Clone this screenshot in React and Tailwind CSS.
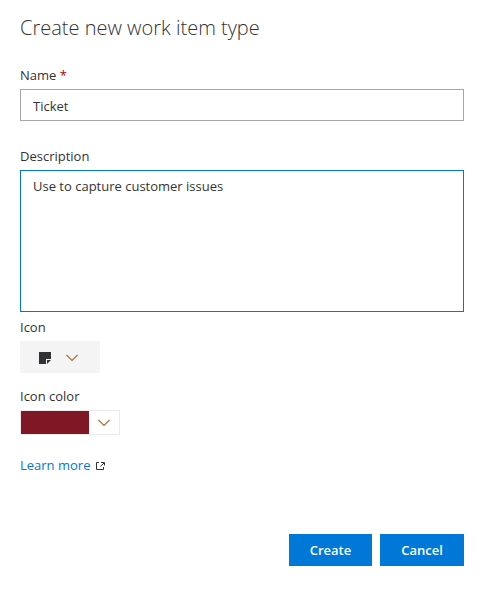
import { useState } from "react";

function Chevron() {
  return (
    <svg className="h-3 w-3 shrink-0" viewBox="0 0 12 12" fill="none" stroke="#a8703f" aria-hidden="true">
      <path d="M0.5 3 L6 8.5 L11.5 3" strokeWidth="1.2" />
    </svg>
  );
}

function NoteIcon() {
  return (
    <svg className="h-3 w-3 shrink-0" viewBox="0 0 12 12" fill="#323234" aria-hidden="true">
      <path d="M0 0H12V7H7V12H0Z" />
      <path d="M8 8H12L8 12Z" />
    </svg>
  );
}

function ExternalIcon() {
  return (
    <svg className="h-[9px] w-[9px]" viewBox="0 0 9 9" fill="none" stroke="#333333" aria-hidden="true">
      <path d="M3 1.5H0.5V8.5H7.5V6" />
      <path d="M5 1.5H8.5V4.5M8 2L4.5 5.5" />
    </svg>
  );
}

export default function App() {
  const [name, setName] = useState("Ticket");
  const [description, setDescription] = useState("Use to capture customer issues");

  return (
    <main className="min-h-screen bg-white pt-3 pr-[35px] pb-6 pl-5 font-['Open_Sans','Noto_Sans',sans-serif] text-[13px] leading-5 text-[#333333]">
      <h1 className="text-[20px] leading-8 font-light text-[#333333]">Create new work item type</h1>
      <form className="mt-[21px]" onSubmit={(e) => e.preventDefault()}>
        <div className="flex flex-col gap-1">
          <label htmlFor="name">
            Name <span className="text-[#a80000]">*</span>
          </label>
          <input
            id="name"
            type="text"
            required
            value={name}
            onChange={(e) => setName(e.target.value)}
            className="h-8 w-full border border-[#a6a6a6] bg-white px-3 pt-0.5 outline-none"
          />
        </div>
        <div className="mt-[25px] flex flex-col gap-1">
          <label htmlFor="description">Description</label>
          <textarea
            id="description"
            value={description}
            onChange={(e) => setDescription(e.target.value)}
            className="h-[142px] w-full resize-none border border-[#0078d4] bg-white px-3 py-[5px] outline-none"
          />
        </div>
        <div className="mt-[5px] flex flex-col items-start gap-1">
          <label htmlFor="icon">Icon</label>
          <button
            id="icon"
            type="button"
            aria-haspopup="listbox"
            className="flex h-8 w-20 items-center gap-[15px] bg-[#f4f4f4] pt-0.5 pl-[19px]"
          >
            <NoteIcon />
            <Chevron />
          </button>
        </div>
        <div className="mt-[13px] flex flex-col items-start gap-1">
          <label htmlFor="color">Icon color</label>
          <button
            id="color"
            type="button"
            aria-haspopup="listbox"
            className="flex h-[25px] w-[100px] items-stretch border border-[#eaeaea] bg-white"
          >
            <span className="w-[68px] bg-[#7f1725]" />
            <span className="flex flex-1 items-center justify-center">
              <Chevron />
            </span>
          </button>
        </div>
        <a href="#learn-more" className="mt-5 inline-flex items-center gap-[6px] text-[#0078d4]">
          Learn more
          <ExternalIcon />
        </a>
        <div className="mt-[59px] flex justify-end gap-2">
          <button type="submit" className="h-8 w-[83px] bg-[#0078d7] font-semibold text-white">
            Create
          </button>
          <button type="button" className="h-8 w-[84px] bg-[#0078d7] font-semibold text-white">
            Cancel
          </button>
        </div>
      </form>
    </main>
  );
}
